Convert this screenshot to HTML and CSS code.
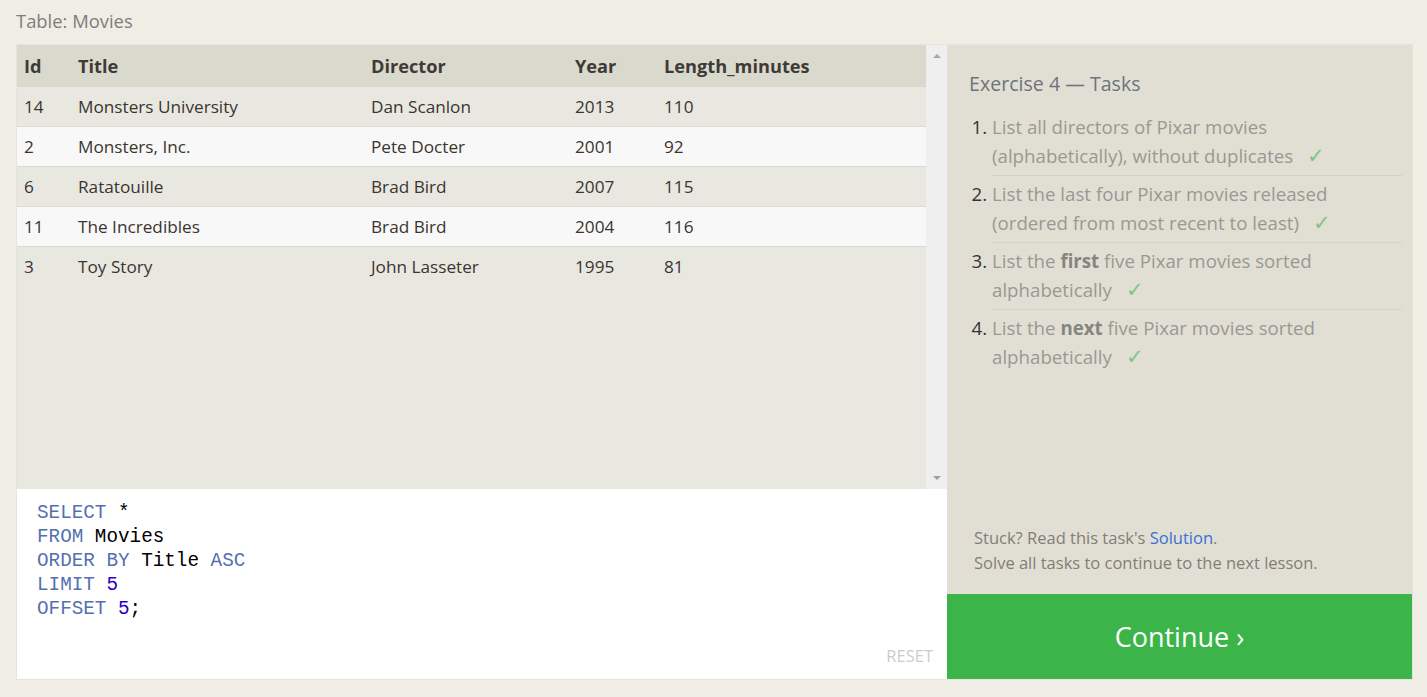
FILE: index.html
```html
<!DOCTYPE html>
<html>
<head>
<meta charset="utf-8">
<link rel="stylesheet" href="styles.css">
</head>
<body>
<div class="page">
  <div class="caption">Table: Movies</div>
  <div class="workspace">
    <div class="left">
      <div class="table-area">
        <div class="table-scroll">
          <table class="data">
            <thead>
              <tr><th class="c-id">Id</th><th class="c-title">Title</th><th class="c-dir">Director</th><th class="c-year">Year</th><th>Length_minutes</th></tr>
            </thead>
            <tbody>
              <tr><td>14</td><td>Monsters University</td><td>Dan Scanlon</td><td>2013</td><td>110</td></tr>
              <tr><td>2</td><td>Monsters, Inc.</td><td>Pete Docter</td><td>2001</td><td>92</td></tr>
              <tr><td>6</td><td>Ratatouille</td><td>Brad Bird</td><td>2007</td><td>115</td></tr>
              <tr><td>11</td><td>The Incredibles</td><td>Brad Bird</td><td>2004</td><td>116</td></tr>
              <tr><td>3</td><td>Toy Story</td><td>John Lasseter</td><td>1995</td><td>81</td></tr>
            </tbody>
          </table>
        </div>
        <div class="scrollbar">
          <span class="arrow up"></span>
          <span class="arrow down"></span>
        </div>
      </div>
      <div class="editor">
        <pre class="code"><span class="kw">SELECT</span> *
<span class="kw">FROM</span> Movies
<span class="kw">ORDER BY</span> Title <span class="kw">ASC</span>
<span class="kw">LIMIT</span> <span class="num">5</span>
<span class="kw">OFFSET</span> <span class="num">5</span>;</pre>
        <span class="reset">RESET</span>
      </div>
    </div>
    <div class="right">
      <div class="tasks">
        <h2 class="tasks-title">Exercise 4 — Tasks</h2>
        <ol class="task-list">
          <li><span class="task-text">List all directors of Pixar movies (alphabetically), without duplicates <span class="check">✓</span></span></li>
          <li><span class="task-text">List the last four Pixar movies released (ordered from most recent to least) <span class="check">✓</span></span></li>
          <li><span class="task-text">List the <b>first</b> five Pixar movies sorted alphabetically <span class="check">✓</span></span></li>
          <li class="last"><span class="task-text">List the <b>next</b> five Pixar movies sorted alphabetically <span class="check">✓</span></span></li>
        </ol>
      </div>
      <div class="help">
        <div>Stuck? Read this task's <a class="link">Solution</a>.</div>
        <div>Solve all tasks to continue to the next lesson.</div>
      </div>
      <div class="continue">Continue ›</div>
    </div>
  </div>
</div>
</body>
</html>
```

FILE: styles.css
```css
html, body {
  margin: 0;
  padding: 0;
}
body {
  background: #f0ede5;
  font-family: "Open Sans", "Noto Sans", sans-serif;
  color: #333;
}
.page {
  padding: 8px 14px 0 16px;
}
.caption {
  font-size: 18.4px;
  color: #7d7d7d;
  height: 36px;
  line-height: 26px;
}
.workspace {
  display: flex;
  border: 1px solid #e7e4dc;
  width: 1395px;
  height: 634px;
}
.left {
  width: 930px;
  display: flex;
  flex-direction: column;
}
.table-area {
  height: 444px;
  display: flex;
}
.table-scroll {
  flex: 1;
  background: #e9e8e0;
}
.data {
  width: 100%;
  border-collapse: collapse;
  font-size: 17.2px;
}
.data th {
  background: #dad9cd;
  text-align: left;
  font-weight: 700;
  font-size: 18.2px;
  height: 42px;
  padding: 0 0 0 7px;
  color: #3e3a36;
}
.data td {
  height: 39px;
  padding: 0 0 0 7px;
  border-bottom: 1px solid #dcdbd3;
  color: #3a3530;
}
.data tbody tr:nth-child(odd) td {
  background: #e9e8e0;
}
.data tbody tr:nth-child(even) td {
  background: #f8f8f8;
}
.data tbody tr:last-child td {
  border-bottom: none;
}
.c-id { width: 47px; }
.c-title { width: 286px; }
.c-dir { width: 197px; }
.c-year { width: 82px; }
.scrollbar {
  width: 21px;
  background: #efefef;
  display: flex;
  flex-direction: column;
  justify-content: space-between;
  align-items: center;
  padding: 9px 0 9px;
}
.arrow {
  width: 0;
  height: 0;
  border-left: 4px solid transparent;
  border-right: 4px solid transparent;
}
.arrow.up {
  border-bottom: 4px solid #a8a8a8;
}
.arrow.down {
  border-top: 4px solid #a0a0a0;
}
.editor {
  flex: 1;
  background: #fff;
  position: relative;
}
.code {
  margin: 0;
  padding: 12px 0 0 20px;
  font-family: "Liberation Mono", "DejaVu Sans Mono", monospace;
  font-size: 19.3px;
  line-height: 24px;
  color: #000;
}
.kw { color: #5470b0; }
.num { color: #2a00c8; }
.reset {
  position: absolute;
  right: 14px;
  bottom: 12px;
  font-size: 16.5px;
  color: #cccccc;
}
.right {
  flex: 1;
  background: #e1dfd4;
  display: flex;
  flex-direction: column;
}
.tasks {
  flex: 1;
  padding: 26px 10px 0 22px;
}
.tasks-title {
  margin: 0;
  font-weight: 400;
  font-size: 19.6px;
  color: #6d737c;
  line-height: 26px;
}
.task-list {
  margin: 16px 0 0;
  padding: 0 0 0 23px;
  font-size: 18.7px;
  color: #333;
}
.task-list li {
  line-height: 28.5px;
  padding: 0 0 5px;
  margin-bottom: 4px;
  border-bottom: 1px solid #d4d2c7;
}
.task-list li.last {
  border-bottom: none;
}
.task-text {
  color: #9a9893;
}
.task-text b {
  color: #86847f;
}
.check {
  color: #7dc585;
  font-size: 21px;
  line-height: 0;
  margin-left: 9px;
}
.help {
  padding: 0 0 19px 27px;
  font-size: 16.5px;
  line-height: 25px;
  color: #817e78;
}
.link {
  color: #3a6fd6;
}
.continue {
  height: 85px;
  background: #3bb54a;
  color: #fff;
  font-size: 27px;
  display: flex;
  align-items: center;
  justify-content: center;
}
```
